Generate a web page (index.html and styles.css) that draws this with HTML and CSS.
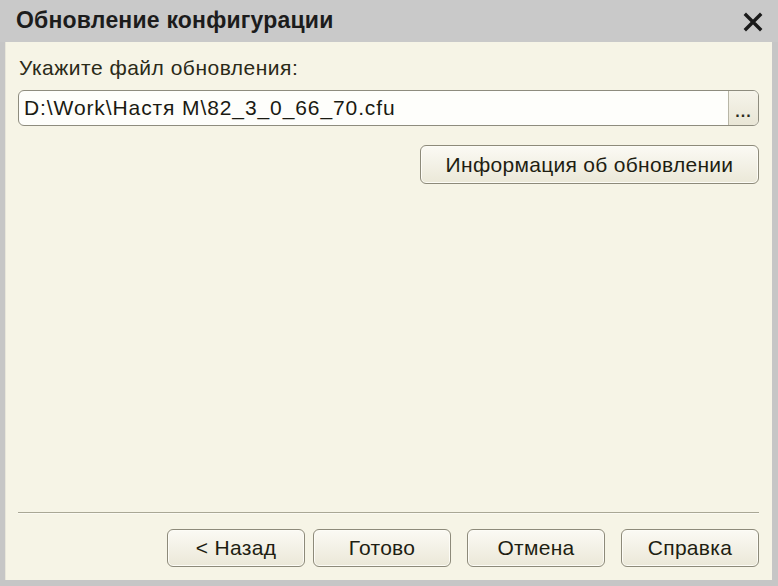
FILE: index.html
```html
<!DOCTYPE html>
<html lang="ru">
<head>
<meta charset="utf-8">
<title>Обновление конфигурации</title>
<link rel="stylesheet" href="styles.css">
</head>
<body>
<div class="window">
  <div class="titlebar">
    <span class="title">Обновление конфигурации</span>
    <span class="close" aria-label="Закрыть">
      <svg width="20" height="20" viewBox="0 0 20 20"><path d="M3 3 L17 17 M17 3 L3 17" stroke="#1a1a1a" stroke-width="3.4" stroke-linecap="square"/></svg>
    </span>
  </div>
  <div class="panel">
    <div class="label">Укажите файл обновления:</div>
    <div class="field">
      <div class="field-text">D:\Work\Настя M\82_3_0_66_70.cfu</div>
      <div class="field-btn"><span class="dots">...</span></div>
    </div>
    <div class="info-row">
      <div class="btn btn-info">Информация об обновлении</div>
    </div>
    <div class="spacer"></div>
    <div class="separator"></div>
    <div class="footer">
      <div class="btn btn-foot">&lt; Назад</div>
      <div class="btn btn-foot">Готово</div>
      <div class="btn btn-foot gap-left">Отмена</div>
      <div class="btn btn-foot gap-left">Справка</div>
    </div>
  </div>
</div>
</body>
</html>
```
FILE: styles.css
```css
html, body {
  margin: 0;
  padding: 0;
  width: 778px;
  height: 586px;
  overflow: hidden;
  background: #c6c6c6;
}
.window {
  width: 778px;
  height: 586px;
  display: flex;
  flex-direction: column;
  font-family: "Liberation Sans", Arial, sans-serif;
  color: #1e1e14;
}
.titlebar {
  height: 42px;
  flex: none;
  display: flex;
  align-items: center;
  justify-content: space-between;
  padding: 0 15px 0 16px;
  background: #c9c9c9;
}
.title {
  font-weight: bold;
  font-size: 23px;
  color: #1c1c1c;
  letter-spacing: 0.2px;
  padding-bottom: 1px;
}
.close {
  display: flex;
  width: 20px;
  height: 20px;
  margin-top: 2px;
}
.panel {
  flex: 1;
  margin: 0 6px 6px 5px;
  background: #f6f4e6;
  border-left: 1px solid #e8e6da;
  display: flex;
  flex-direction: column;
  padding: 14px 13px 13px 12px;
}
.label {
  font-size: 21px;
  line-height: 24px;
  letter-spacing: 0.5px;
  color: #2a2a18;
  margin-left: 1px;
}
.field {
  margin-top: 10px;
  height: 36px;
  box-sizing: border-box;
  border: 1px solid #8e8c7e;
  border-radius: 6px;
  display: flex;
  overflow: hidden;
  background: #fefefb;
}
.field-text {
  flex: 1;
  font-size: 21px;
  line-height: 34px;
  letter-spacing: 0.9px;
  padding-left: 5px;
  color: #1a1a12;
}
.field-btn {
  width: 29px;
  border-left: 1px solid #b8b6a6;
  background: linear-gradient(#f6f4ea, #e9e6d6);
  display: flex;
  align-items: flex-end;
  justify-content: center;
}
.dots {
  font-weight: bold;
  font-size: 16px;
  line-height: 16px;
  letter-spacing: 1px;
  color: #2a2a1a;
  padding-bottom: 5px;
}
.info-row {
  display: flex;
  justify-content: flex-end;
  margin-top: 19px;
}
.btn {
  box-sizing: border-box;
  border: 1px solid #8d8a7a;
  border-radius: 6px;
  background: linear-gradient(#fbfaf4, #ebe8d8);
  box-shadow: inset 0 0 0 1px #fdfcf6;
  display: flex;
  align-items: center;
  justify-content: center;
  font-size: 21px;
  letter-spacing: 0.3px;
  color: #1e1e12;
}
.btn-info {
  width: 339px;
  height: 39px;
}
.spacer {
  flex: 1;
}
.separator {
  height: 1px;
  background: #a9a795;
  border-bottom: 1px solid #fbfaf2;
}
.footer {
  display: flex;
  justify-content: flex-end;
  gap: 8px;
  margin-top: 15px;
}
.btn-foot {
  width: 138px;
  height: 38px;
}
.gap-left {
  margin-left: 8px;
}
```
